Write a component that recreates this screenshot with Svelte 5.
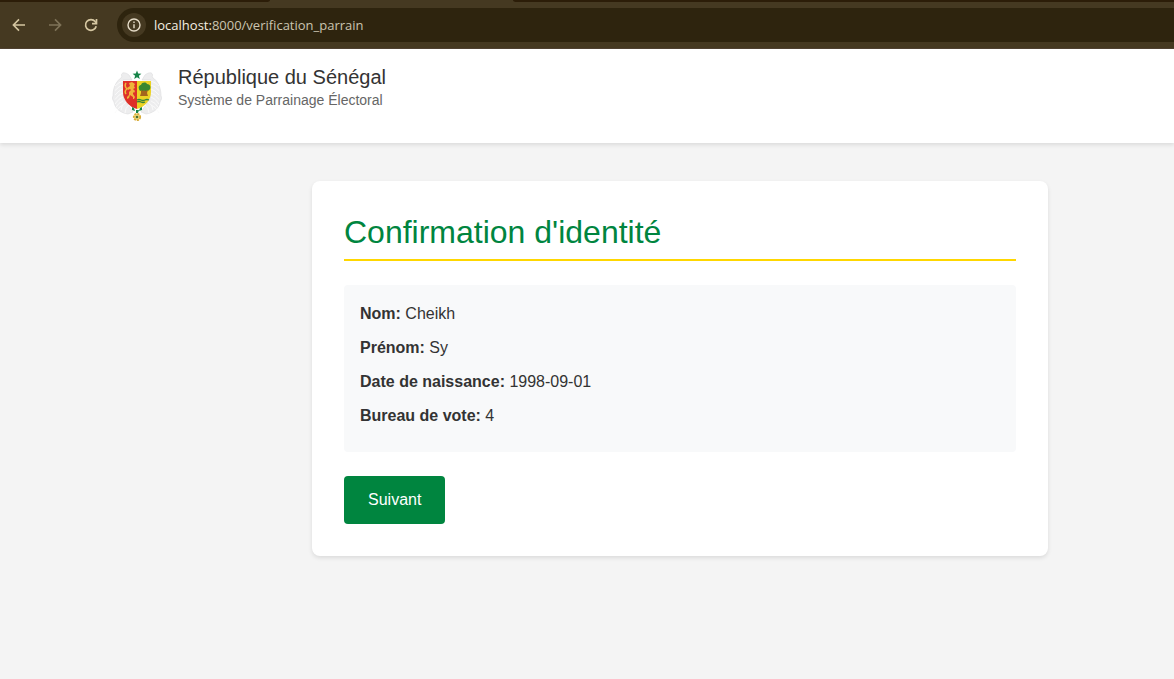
<script>
  const rows = [
    ['Nom:', 'Cheikh'],
    ['Prénom:', 'Sy'],
    ['Date de naissance:', '1998-09-01'],
    ['Bureau de vote:', '4']
  ];
  const feathers = [0, 1, 2, 3, 4, 5, 6];
</script>

<div class="window">
  <div class="tabs"><span class="tab-left"></span><span class="tab-active"></span><span class="tab-right"></span></div>
  <nav class="toolbar" aria-label="Navigation">
    <button class="tool" aria-label="Retour">
      <svg width="16" height="16" viewBox="0 0 16 16" fill="none" stroke="currentColor" stroke-width="1.6"><path d="M14 8H2.8M8 2.4 2.4 8 8 13.6" /></svg>
    </button>
    <button class="tool dim" aria-label="Suivant" disabled>
      <svg width="16" height="16" viewBox="0 0 16 16" fill="none" stroke="currentColor" stroke-width="1.6"><path d="M2 8h11.2M8 2.4 13.6 8 8 13.6" /></svg>
    </button>
    <button class="tool" aria-label="Actualiser">
      <svg width="16" height="16" viewBox="0 0 16 16" fill="none" stroke="currentColor" stroke-width="1.7"><path d="M13.2 9.2A5.4 5.4 0 1 1 12.2 4.6L13.4 6" /><path d="M13.5 2v4.6H9" /></svg>
    </button>
    <div class="address">
      <button class="info" aria-label="Informations sur le site">
        <svg width="16" height="16" viewBox="0 0 16 16" fill="none" stroke="currentColor" stroke-width="1.4"><circle cx="8" cy="8" r="6" /><path d="M8 7.2v4M8 4.6v1.5" /></svg>
      </button>
      <span class="url"><b>localhost:</b>8000/verification_parrain</span>
    </div>
  </nav>

  <header>
    <svg class="crest" width="50" height="54" viewBox="0 0 50 54" role="img" aria-label="Armoiries du Sénégal">
      <g fill="#ededee" stroke="#dcdcde" stroke-width="0.6">
        <path d="M17 6C12 2 8 4 10 8C3 13 1 20 1 27L0 29L2 33C3 40 9 44 16 45L21 43L12 30L11 11H20zM33 6c5-4 9-2 7 2c7 5 9 12 9 19l1 2-2 4c-1 7-7 11-14 12l-5-2 9-13 1-19h-9z" />
        <g fill="none" stroke="#fafafa" stroke-width="0.9">
          {#each feathers as n}
            <path d="M11 {12 + n * 4}q-4 1-8 {5 + n * 0.5}M39 {12 + n * 4}q4 1 8 {5 + n * 0.5}" />
          {/each}
          <path d="M14 33q-5 3-5 8M17 36q-4 3-4 8M36 33q5 3 5 8M33 36q4 3 4 8" />
        </g>
      </g>
      <path fill="#168449" d="m25 1.6 1.2 3 3.2.2-2.5 2 .9 3.2-2.8-1.8-2.8 1.8.9-3.2-2.5-2 3.2-.2z" />
      <path fill="#de3029" d="M11 12h14v28c-8-2-14-9-14-17z" />
      <path fill="#ecd325" d="M25 12h14v11c0 8-6 15-14 17z" />
      <path fill="none" stroke="#efb839" stroke-width="1.5" d="M14 25q-2-3 1-5-3-3-1-6" />
      <path fill="#efb43a" d="m17 14 3-1 3 2-1 2 1 2-2 1 2 2-1 2-1-1 0 2 2 3-1 2-1 0 0-2-3-2-1 3-2 1 0-2 2-2 0-3 2-2-1-1-2 1-1-2 3-2z" />
      <path fill="#39872f" d="M27 20c-1-3 1-4 2-4 1-3 5-3 6-1 3 0 4 3 3 5-1 2-3 2-4 2-2 1-4 0-5 0-1 0-2-1-2-2z" />
      <path fill="#a4651d" d="m29 21 2 1 1-1 1 1 3-1-1 3 1 3h-8l1-3z" />
      <path fill="none" stroke="#36843a" stroke-width="1.3" d="M25 31q2-1 4 0t4 0 4 0M25 33q2-1 4 0t4 0" />
      <path fill="#168449" d="m20 38 2 1 1 3-3-1zM30 38l-2 1-1 3 3-1zM24 41h3l-1 3h-2z" />
      <circle cx="25" cy="48" r="3.2" fill="#efd77e" stroke="#d7ac3b" stroke-width="1.8" stroke-dasharray="2 1" />
      <circle cx="25" cy="48" r="1.3" fill="#4a722f" />
    </svg>
    <div>
      <p class="country">République du Sénégal</p>
      <p class="system">Système de Parrainage Électoral</p>
    </div>
  </header>

  <main>
    <section class="card">
      <h1>Confirmation d'identité</h1>
      <div class="details">
        {#each rows as [label, value]}
          <p><strong>{label}</strong> {value}</p>
        {/each}
      </div>
      <button class="next">Suivant</button>
    </section>
  </main>
</div>

<style>
  :global(body) { margin: 0; background: #f4f4f4; }
  .window { font-family: "Liberation Sans", Arial, sans-serif; color: #333; }
  p, h1 { margin: 0; font-weight: 400; }
  button { border: 0; padding: 0; font: inherit; }
  svg { display: block; }
  .tabs { display: flex; height: 2px; background: #453921; }
  .tab-left, .tab-right { background: #2c1d08; }
  .tab-left { width: 270px; border-bottom-right-radius: 4px 2px; }
  .tab-active { width: 243px; }
  .tab-right { flex: 1; border-bottom-left-radius: 4px 2px; }
  .toolbar {
    display: flex; align-items: center; gap: 20px;
    padding: 6px 0 6px 11px; background: #453921; border-bottom: 1px solid #504232;
  }
  .tool { background: none; color: #d5c6a1; }
  .dim { color: #7f7358; }
  .address {
    flex: 1; display: flex; align-items: center; gap: 8px;
    height: 34px; padding-left: 5px; margin-left: -2px;
    background: #2e240e; border-radius: 17px 0 0 17px;
  }
  .info {
    display: grid; place-items: center; width: 24px; height: 24px;
    border-radius: 50%; background: #453921; color: #e6dcc8;
  }
  .url { font: 13px/18px "Open Sans", "Noto Sans", sans-serif; color: #cbc4b0; }
  .url b { font-weight: 400; color: #f5efe2; }
  header {
    display: flex; gap: 16px; padding: 16px 32px 16px 112px; height: 62px;
    background: #fff; box-shadow: 0 2px 4px rgba(0, 0, 0, 0.1);
  }
  .crest { margin-top: 4px; }
  .country { font-size: 20px; line-height: 24px; }
  .system { font-size: 14px; line-height: 22px; color: #666; }
  main { padding: 38px 126px 32px 312px; }
  .card {
    max-width: 672px; padding: 32px; background: #fff;
    border-radius: 8px; box-shadow: 0 2px 4px rgba(0, 0, 0, 0.1);
  }
  h1 {
    font-size: 32px; line-height: 38px; color: #00853f;
    padding-bottom: 8px; border-bottom: 2px solid #ffd700; margin-bottom: 24px;
  }
  .details { padding: 16px 16px 15px; margin-bottom: 24px; background: #f8f9fa; border-radius: 4px; }
  .details p { font-size: 16px; line-height: 26px; margin-bottom: 8px; }
  .next {
    padding: 0 24px; height: 48px; font-size: 16px; color: #fff;
    background: #00853f; border-radius: 4px; display: block;
  }
</style>
